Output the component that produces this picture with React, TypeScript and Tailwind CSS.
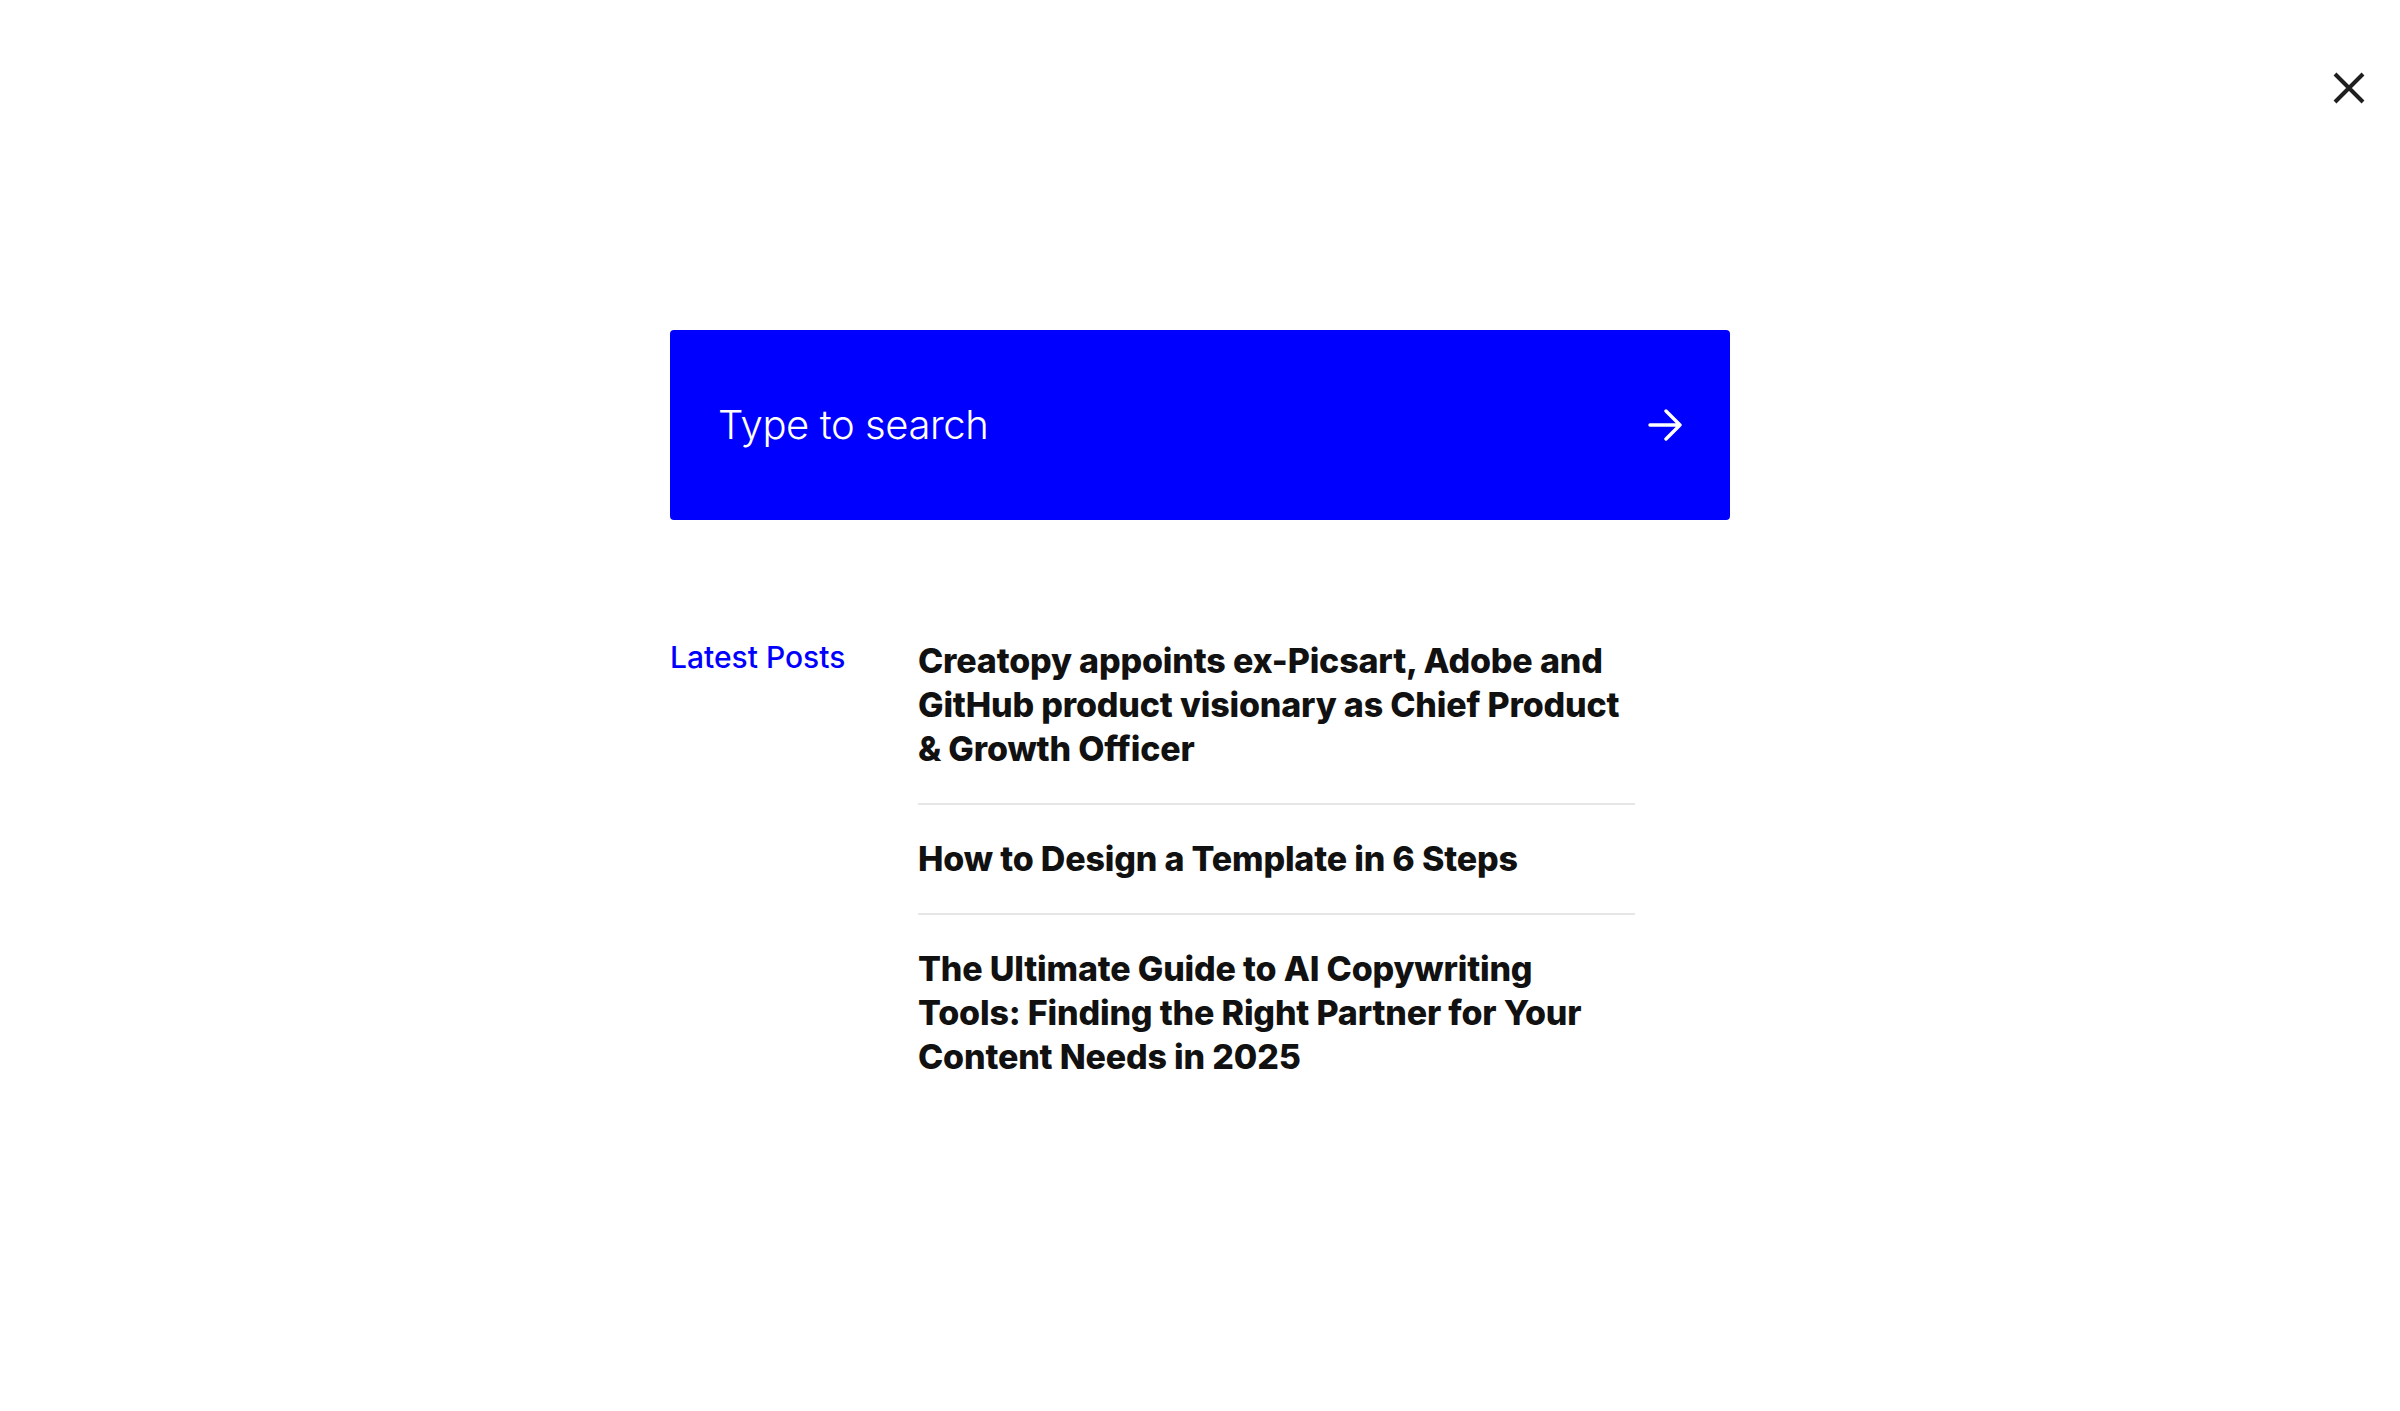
import { useState } from "react";

const posts = [
  "Creatopy appoints ex-Picsart, Adobe and GitHub product visionary as Chief Product & Growth Officer",
  "How to Design a Template in 6 Steps",
  "The Ultimate Guide to AI Copywriting Tools: Finding the Right Partner for Your Content Needs in 2025",
];

export default function App() {
  const [query, setQuery] = useState("");

  return (
    <div className="relative min-h-screen bg-white font-['Inter',sans-serif]">
      <button
        type="button"
        aria-label="Close"
        className="absolute right-[35px] top-[72px] text-[#1f1f1f]"
      >
        <svg width="32" height="32" viewBox="0 0 32 32" fill="none" stroke="currentColor" strokeWidth="4">
          <path d="M2 2 L30 30 M30 2 L2 30" />
        </svg>
      </button>

      <div className="mx-auto w-[1060px] pt-[330px]">
        <form
          onSubmit={(e) => e.preventDefault()}
          className="flex h-[190px] items-center rounded-[4px] bg-[#0000ff] px-12"
        >
          <input
            value={query}
            onChange={(e) => setQuery(e.target.value)}
            placeholder="Type to search"
            className="flex-1 bg-transparent text-[40px] font-light tracking-[-0.01em] text-white outline-none placeholder:text-white"
          />
          <button type="submit" className="text-white" aria-label="Search">
            <svg width="34" height="34" viewBox="0 0 34 34" fill="none" stroke="currentColor" strokeWidth="3.4" strokeLinecap="round" strokeLinejoin="round">
              <path d="M2 17 H32 M18 3 L32 17 L18 31" />
            </svg>
          </button>
        </form>

        <div className="mt-[119px] flex">
          <h3 className="w-[248px] shrink-0 text-[30px] leading-[36px] font-medium text-[#0000ff]">
            Latest Posts
          </h3>
          <ul className="w-[717px]">
            {posts.map((title, idx) => (
              <li
                key={idx}
                className={`border-[#e6e6e6] ${idx === 0 ? "pb-8" : "py-8"} ${idx < posts.length - 1 ? "border-b-2" : ""}`}
              >
                <a href="#" className="block text-[34px] leading-[44px] font-extrabold tracking-[-0.005em] text-[#111111]">
                  {title}
                </a>
              </li>
            ))}
          </ul>
        </div>
      </div>
    </div>
  );
}
